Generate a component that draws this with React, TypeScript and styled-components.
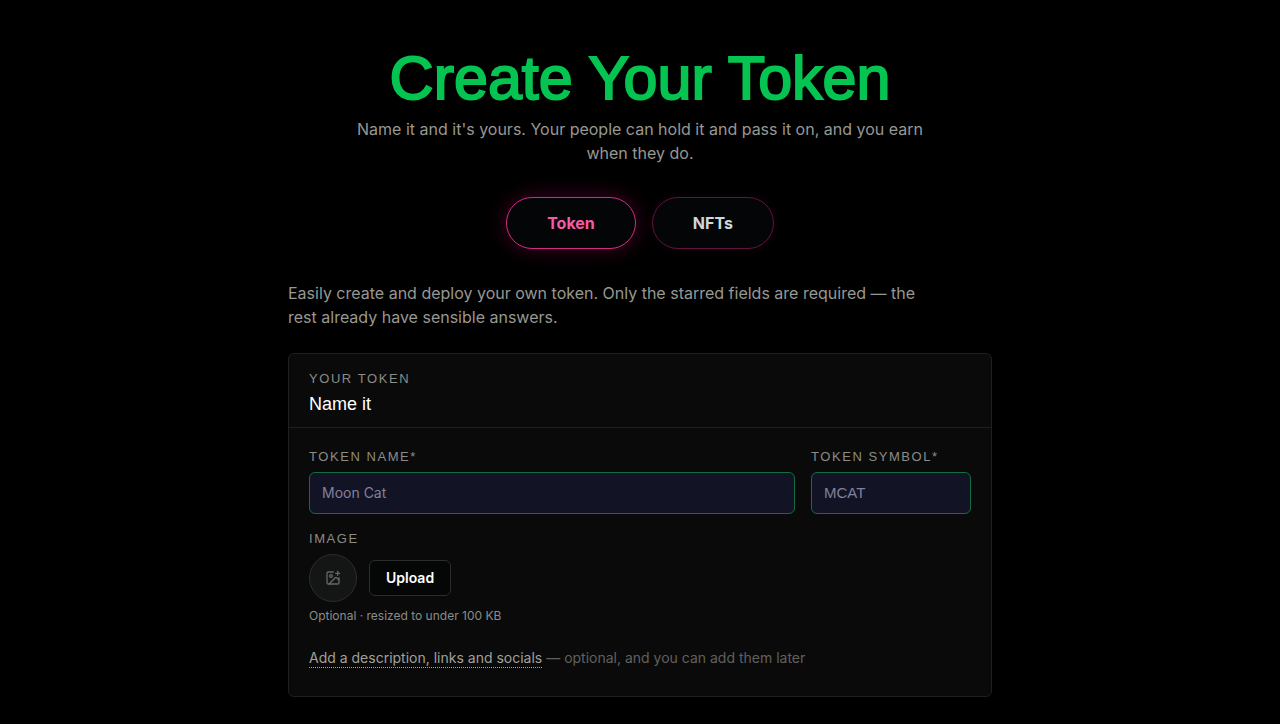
import React from "react";
import styled, { createGlobalStyle } from "styled-components";
import { ImagePlus } from "lucide-react";

const display = `"Liberation Sans", Arial, sans-serif`;
const body = `Inter, "Liberation Sans", sans-serif`;

const GlobalStyle = createGlobalStyle`
  *, *::before, *::after { box-sizing: border-box; }
  html { background: #000; }
  body { margin: 0; background: #000; color: #fff; font: 400 16px/24px ${body}; }
  button, input { font: inherit; }
`;

const Page = styled.main`
  width: 100%;
  max-width: 736px;
  margin: 0 auto;
  padding: 48px 16px 27px;
`;

const Hero = styled.header`
  display: flex;
  flex-direction: column;
  align-items: center;
  text-align: center;
`;

const Title = styled.h1`
  margin: 0;
  font: 400 61px/60px ${display};
  color: #05c451;
  -webkit-text-stroke: 2px #05c451;
`;

const Lead = styled.p`
  margin: 9px 0 0;
  max-width: 576px;
  color: #979893;
`;

const Tabs = styled.div`
  display: flex;
  justify-content: center;
  gap: 16px;
  margin-top: 32px;
`;

const Tab = styled.button<{ $active?: boolean }>`
  height: 52px;
  padding: 0 40px;
  border: 1px solid ${(p) => (p.$active ? "#d02c83" : "#63133e")};
  border-radius: 26px;
  background: #030506;
  color: ${(p) => (p.$active ? "#f65ba6" : "#d1d5dc")};
  font-weight: 700;
  box-shadow: ${(p) =>
    p.$active
      ? "0 0 20px rgba(230, 0, 118, 0.3)"
      : "0 0 12px rgba(230, 0, 118, 0.08)"};
  cursor: pointer;
`;

const Intro = styled.p`
  margin: 32px 0 0;
  max-width: 640px;
  color: #979893;
`;

const Card = styled.section`
  margin-top: 24px;
  border: 1px solid #1e1f1f;
  border-radius: 6px;
  background: #0a0a0a;
`;

const CardHeader = styled.header`
  padding: 16px 20px 11px;
  border-bottom: 1px solid #1e1f1f;
`;

const Eyebrow = styled.p`
  margin: 0;
  font: 400 13px/18px ${display};
  letter-spacing: 0.12em;
  text-transform: uppercase;
  color: #8b8c87;
`;

const CardTitle = styled.h2`
  margin: 4px 0 0;
  font: 400 18px/24px ${display};
  color: #fff;
`;

const CardBody = styled.form`
  padding: 20px 20px 28px;
`;

const FieldRow = styled.div`
  display: grid;
  grid-template-columns: 1fr 160px;
  gap: 16px;
`;

const Field = styled.div`
  display: flex;
  flex-direction: column;
  gap: 6px;
  min-width: 0;
`;

const Label = styled.label`
  font: 400 13px/18px ${display};
  letter-spacing: 0.12em;
  text-transform: uppercase;
  color: #8b8c87;
`;

const TextInput = styled.input<{ $ticker?: boolean }>`
  width: 100%;
  height: 42px;
  padding: 0 12px 2px;
  border: 1px solid #126d42;
  border-radius: 6px;
  background: #131326;
  color: #fff;
  font-family: ${(p) => (p.$ticker ? display : body)};
  font-size: ${(p) => (p.$ticker ? "15px" : "14px")};
  &::placeholder { color: #81819a; opacity: 1; }
`;

const ImageField = styled(Field)`
  margin-top: 16px;
`;

const UploadRow = styled.div`
  display: flex;
  align-items: center;
  gap: 12px;
`;

const Preview = styled.div`
  display: grid;
  place-items: center;
  width: 48px;
  height: 48px;
  border: 1px solid #2b2c2c;
  border-radius: 50%;
  background: #141515;
  color: #666763;
`;

const UploadButton = styled.button`
  height: 36px;
  padding: 0 16px;
  border: 1px solid #2b2c2c;
  border-radius: 6px;
  background: #050606;
  color: #fff;
  font-size: 14px;
  font-weight: 600;
  cursor: pointer;
`;

const Hint = styled.p`
  margin: 6px 0 0;
  font-size: 12px;
  line-height: 16px;
  color: #8b8c87;
`;

const More = styled.p`
  margin: 24px 0 0;
  font-size: 14px;
  line-height: 20px;
  color: #60615e;
`;

const MoreLink = styled.a`
  padding-bottom: 1px;
  border-bottom: 1px dotted #a5a6a0;
  color: #a0a19b;
  text-decoration: none;
`;

export default function App() {
  return (
    <>
      <GlobalStyle />
      <Page>
        <Hero>
          <Title>Create Your Token</Title>
          <Lead>
            Name it and it's yours. Your people can hold it and pass it on, and
            you earn when they do.
          </Lead>
        </Hero>
        <Tabs>
          <Tab type="button" $active aria-pressed="true">Token</Tab>
          <Tab type="button" aria-pressed="false">NFTs</Tab>
        </Tabs>
        <Intro>
          Easily create and deploy your own token. Only the starred fields are
          required — the rest already have sensible answers.
        </Intro>
        <Card>
          <CardHeader>
            <Eyebrow>Your token</Eyebrow>
            <CardTitle>Name it</CardTitle>
          </CardHeader>
          <CardBody>
            <FieldRow>
              <Field>
                <Label htmlFor="name">Token name*</Label>
                <TextInput id="name" placeholder="Moon Cat" required />
              </Field>
              <Field>
                <Label htmlFor="symbol">Token symbol*</Label>
                <TextInput id="symbol" $ticker placeholder="MCAT" required />
              </Field>
            </FieldRow>
            <ImageField>
              <Label htmlFor="upload">Image</Label>
              <UploadRow>
                <Preview>
                  <ImagePlus size={16} aria-hidden="true" />
                </Preview>
                <UploadButton id="upload" type="button">Upload</UploadButton>
              </UploadRow>
            </ImageField>
            <Hint>Optional · resized to under 100 KB</Hint>
            <More>
              <MoreLink href="#details">Add a description, links and socials</MoreLink>
              {" — optional, and you can add them later"}
            </More>
          </CardBody>
        </Card>
      </Page>
    </>
  );
}
